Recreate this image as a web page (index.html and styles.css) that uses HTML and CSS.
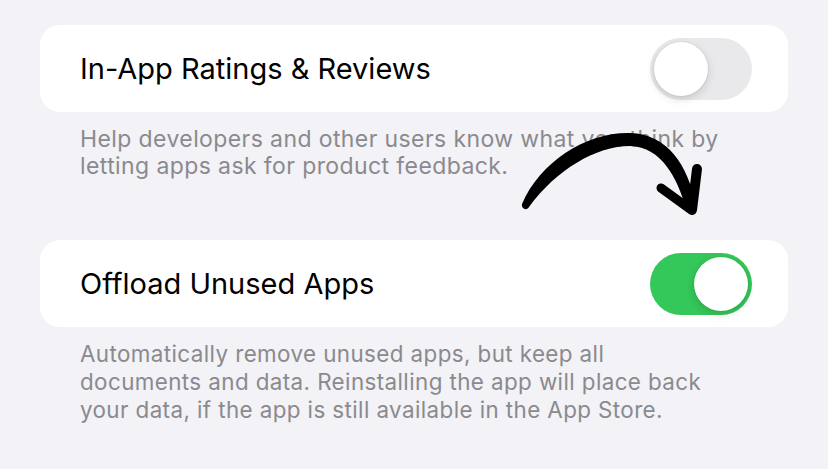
FILE: index.html
```html
<!DOCTYPE html>
<html lang="en">
<head>
<meta charset="utf-8">
<title>Settings</title>
<link rel="stylesheet" href="styles.css">
</head>
<body>
<main class="settings">
  <section class="group">
    <div class="cell">
      <span class="cell-label">In-App Ratings &amp; Reviews</span>
      <span class="switch" role="switch" aria-checked="false"><span class="knob"></span></span>
    </div>
    <p class="footer">Help developers and other users know what you think by letting apps ask for product feedback.</p>
  </section>

  <section class="group group-second">
    <div class="cell">
      <span class="cell-label">Offload Unused Apps</span>
      <span class="switch on" role="switch" aria-checked="true"><span class="knob"></span></span>
    </div>
    <p class="footer">Automatically remove unused apps, but keep all documents and data. Reinstalling the app will place back your data, if the app is still available in the App Store.</p>
  </section>

  <!-- hand-drawn arrow pointing at the second switch -->
  <svg class="scribble" width="828" height="469" viewBox="0 0 828 469" aria-hidden="true">
    <path d="M522,204 C540,162 586,132 630,133 C668,134 688,166 696,205 L686,208 C677,178 662,147 630,146 C596,146 556,170 529,207 C527,211 521,209 522,204 Z" fill="#000"/>
    <path d="M661,188 L690,209" stroke="#000" stroke-width="9" stroke-linecap="round" fill="none"/>
    <path d="M697,169 L692,210" stroke="#000" stroke-width="10" stroke-linecap="round" fill="none"/>
  </svg>
</main>
</body>
</html>
```

FILE: styles.css
```css
* {
  box-sizing: border-box;
}

html, body {
  margin: 0;
  background: #f2f2f7;
}

body {
  font-family: Inter, "Liberation Sans", Arial, sans-serif;
  -webkit-font-smoothing: antialiased;
}

.settings {
  position: relative;
  width: 828px;
  height: 469px;
  padding: 25px 40px 0;
  overflow: hidden;
}

.group-second {
  margin-top: 60px;
}

.cell {
  display: flex;
  align-items: center;
  justify-content: space-between;
  height: 87px;
  padding: 0 36px 0 40px;
  background: #fff;
  border-radius: 20px;
}

.cell-label {
  font-size: 29px;
  line-height: 35px;
  color: #000;
}

.switch {
  position: relative;
  flex: none;
  width: 102px;
  height: 62px;
  border-radius: 31px;
  background: #e9e9eb;
}

.switch .knob {
  position: absolute;
  top: 4px;
  left: 4px;
  width: 54px;
  height: 54px;
  border-radius: 50%;
  background: #fff;
  box-shadow: 0 3px 8px rgba(0, 0, 0, 0.15), 0 0 0 1px rgba(0, 0, 0, 0.04);
}

.switch.on {
  background: #34c759;
}

.switch.on .knob {
  left: 44px;
}

.footer {
  margin: 14px 0 0;
  padding: 0 63px 0 40px;
  font-size: 23px;
  line-height: 27px;
  color: #8a8a8e;
  letter-spacing: 0.4px;
}

.group-second .footer {
  margin-top: 13px;
  font-size: 22.4px;
  line-height: 28px;
}

.scribble {
  position: absolute;
  top: 0;
  left: 0;
  pointer-events: none;
}
```
